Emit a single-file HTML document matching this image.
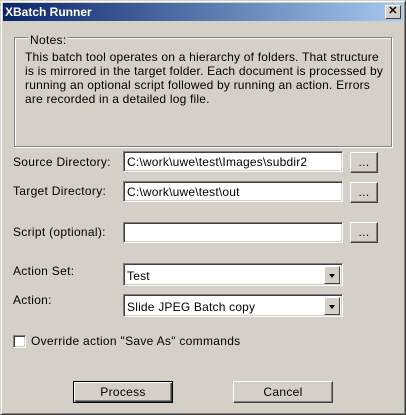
<!DOCTYPE html><html><head><style>
*{margin:0;padding:0;box-sizing:border-box}
body{width:406px;height:415px;background:#d4d0c8;font:12px "Liberation Sans",sans-serif;color:#000;position:relative;overflow:hidden;letter-spacing:0.3px}
.win{position:absolute;left:0;top:0;width:406px;height:415px;border:1px solid;border-color:#d4d0c8 #404040 #404040 #d4d0c8;box-shadow:inset 1px 1px #fff,inset -1px -1px #808080}
.title{position:absolute;left:3px;top:3px;width:400px;height:18px;background:linear-gradient(90deg,#0a246a,#a6caf0);color:#fff;font-weight:bold;font-size:12px;line-height:18px;padding-left:2px;letter-spacing:0}
.close{position:absolute;left:385px;top:5px;width:16px;height:14px;background:#d4d0c8;border:1px solid;border-color:#fff #404040 #404040 #fff;font:bold 11px "Liberation Sans";text-align:center;line-height:11px;color:#000}
.a{position:absolute;white-space:nowrap}
.grp{left:14px;top:37px;width:378px;height:110px;border:1px solid #808080;box-shadow:1px 1px #fff,inset 1px 1px #fff}
.lg{left:28px;top:33px;background:#d4d0c8;padding:0 2px}
.notes{left:25px;top:50px;line-height:14px;font-size:12px;letter-spacing:0.2px}
.in{background:#fff;border:1px solid;border-color:#808080 #fff #fff #808080;box-shadow:inset 1px 1px #404040,inset -1px -1px #d4d0c8;padding:3px 0 0 3px;height:21px;letter-spacing:0.2px}
.btn{background:#d4d0c8;border:1px solid;border-color:#fff #404040 #404040 #fff;box-shadow:inset -1px -1px #808080;text-align:center;height:21px;line-height:19px}
.dd{position:absolute;right:2px;top:2px;width:16px;height:18px;background:#d4d0c8;border:1px solid;border-color:#fff #404040 #404040 #fff}
.dd:after{content:"";position:absolute;left:4px;top:7px;border:3px solid transparent;border-top:4px solid #000;border-bottom:0}
</style></head><body><div class="win"></div>
<div class="title">XBatch Runner</div><div class="close">✕</div>
<div class="a grp"></div><div class="a lg">Notes:</div>
<div class="a notes">This batch tool operates on a hierarchy of folders. That structure<br>is is mirrored in the target folder. Each document is processed by<br>running an optional script followed by running an action. Errors<br>are recorded in a detailed log file.</div>
<div class="a" style="left:13px;top:155px">Source Directory:</div>
<div class="a in" style="left:123px;top:151px;width:220px">C:\work\uwe\test\Images\subdir2</div>
<div class="a btn" style="left:350px;top:152px;width:28px">...</div>
<div class="a" style="left:13px;top:184px">Target Directory:</div>
<div class="a in" style="left:123px;top:181px;width:220px">C:\work\uwe\test\out</div>
<div class="a btn" style="left:350px;top:182px;width:28px">...</div>
<div class="a" style="left:13px;top:225px">Script (optional):</div>
<div class="a in" style="left:123px;top:222px;width:220px"></div>
<div class="a btn" style="left:350px;top:222px;width:28px">...</div>
<div class="a" style="left:13px;top:264px">Action Set:</div>
<div class="a in" style="left:123px;top:263px;width:220px;height:23px;padding-top:5px">Test<div class="dd"></div></div>
<div class="a" style="left:13px;top:293px">Action:</div>
<div class="a in" style="left:123px;top:294px;width:220px;height:23px;padding-top:5px">Slide JPEG Batch copy<div class="dd"></div></div>
<div class="a in" style="left:13px;top:335px;width:13px;height:13px;padding:0"></div>
<div class="a" style="left:31px;top:334px">Override action "Save As" commands</div>
<div class="a btn" style="left:73px;top:381px;width:100px;height:22px;border:1px solid #000;box-shadow:inset 1px 1px #fff,inset -1px -1px #404040,inset -2px -2px #808080;line-height:20px">Process</div>
<div class="a btn" style="left:233px;top:381px;width:100px;height:22px;line-height:20px">Cancel</div>
</body></html>
